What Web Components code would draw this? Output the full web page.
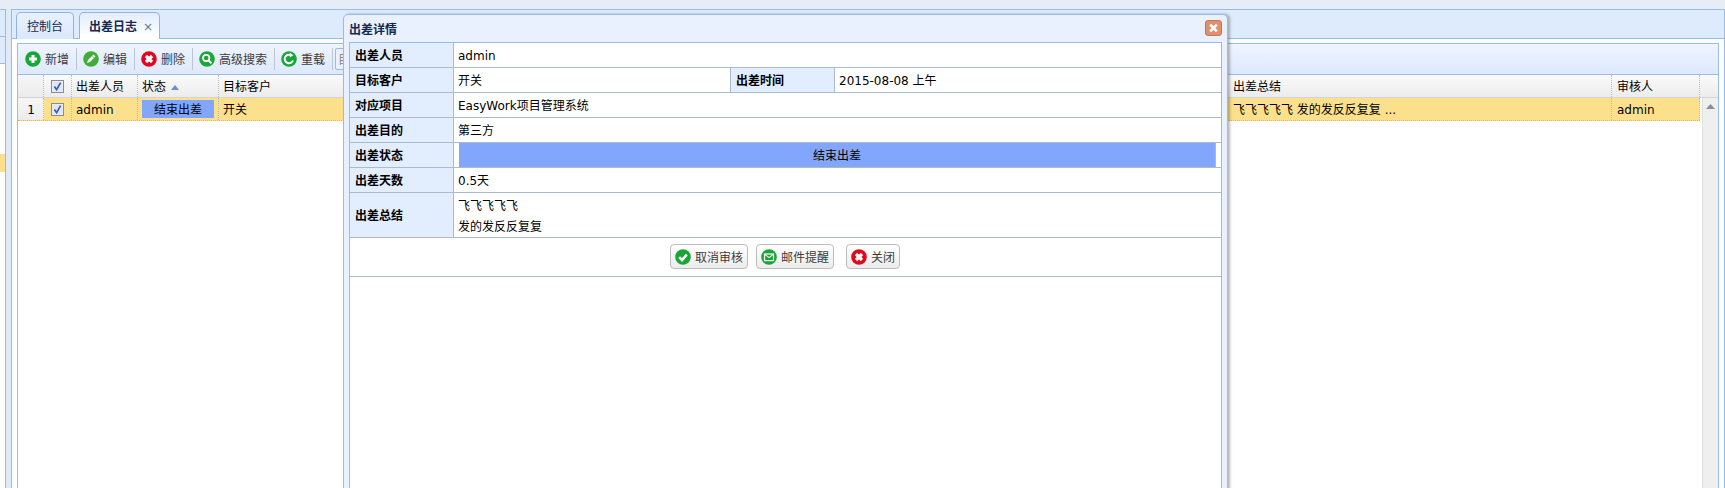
<!DOCTYPE html>
<html lang="zh">
<head>
<meta charset="utf-8">
<title>出差日志</title>
<style>
html,body{margin:0;padding:0;height:488px;overflow:hidden;background:#e6edf6;}
body{font:12px/16px "DejaVu Sans","Noto Sans CJK SC",sans-serif;color:#000;}
</style>
</head>
<body>
<work-shell>
  <side-strip slot="side"></side-strip>
  <tab-panel slot="main">
    <tab-item slot="tabs">控制台</tab-item>
    <tab-item slot="tabs" active closable>出差日志</tab-item>
    <tool-bar>
      <tool-button icon="plus">新增</tool-button>
      <tool-sep></tool-sep>
      <tool-button icon="edit">编辑</tool-button>
      <tool-sep></tool-sep>
      <tool-button icon="del">删除</tool-button>
      <tool-sep></tool-sep>
      <tool-button icon="search">高级搜索</tool-button>
      <tool-sep></tool-sep>
      <tool-button icon="reload">重载</tool-button>
      <tool-sep></tool-sep>
      <tool-box>目</tool-box>
    </tool-bar>
    <data-grid>
      <grid-row slot="head" head>
        <grid-cell kind="num"></grid-cell>
        <grid-cell kind="check"><check-box></check-box></grid-cell>
        <grid-cell>出差人员</grid-cell>
        <grid-cell>状态<sort-arrow></sort-arrow></grid-cell>
        <grid-cell>目标客户</grid-cell>
        <grid-cell wide>出差总结</grid-cell>
        <grid-cell wide>审核人</grid-cell>
      </grid-row>
      <grid-row slot="rows" selected>
        <grid-cell kind="num">1</grid-cell>
        <grid-cell kind="check"><check-box></check-box></grid-cell>
        <grid-cell>admin</grid-cell>
        <grid-cell kind="pill"><status-pill>结束出差</status-pill></grid-cell>
        <grid-cell>开关</grid-cell>
        <grid-cell wide>飞飞飞飞飞 发的发反反复复 ...</grid-cell>
        <grid-cell wide>admin</grid-cell>
      </grid-row>
    </data-grid>
  </tab-panel>
  <detail-dialog slot="over" heading="出差详情">
    <detail-row label="出差人员"><span>admin</span></detail-row>
    <detail-row label="目标客户" label2="出差时间" value2="2015-08-08 上午"><span>开关</span></detail-row>
    <detail-row label="对应项目"><span>EasyWork项目管理系统</span></detail-row>
    <detail-row label="出差目的"><span>第三方</span></detail-row>
    <detail-row label="出差状态" status><span>结束出差</span></detail-row>
    <detail-row label="出差天数"><span>0.5天</span></detail-row>
    <detail-row label="出差总结" tall><span>飞飞飞飞飞<br>发的发反反复复</span></detail-row>
    <action-row>
      <action-button icon="check">取消审核</action-button>
      <action-button icon="mail">邮件提醒</action-button>
      <action-button icon="del" style="margin-left:4px">关闭</action-button>
    </action-row>
  </detail-dialog>
</work-shell>

<script>
const ICONS = {
  plus:  ['#18a636','<path d="M8 4v8M4 8h8" stroke="#fff" stroke-width="3" fill="none"/>'],
  edit:  ['#3fae36','<path d="M4 12l1-3 5.5-5.5 2 2L7 11z" fill="#fff"/><path d="M9.6 5.3l1.6 1.6" stroke="#3fae36" stroke-width=".8"/>'],
  del:   ['#e2081c','<path d="M5 5l6 6M11 5l-6 6" stroke="#fff" stroke-width="3.2" fill="none"/>'],
  search:['#1ea63a','<circle cx="7.2" cy="7" r="3.2" fill="none" stroke="#fff" stroke-width="1.7"/><path d="M9.6 9.4l2.8 2.8" stroke="#fff" stroke-width="2"/>'],
  reload:['#18a636','<path d="M12 9.5A4.3 4.3 0 1 1 9.6 4" fill="none" stroke="#fff" stroke-width="2"/><path d="M8.8 1.8l3.6 2.4-3.6 2.2z" fill="#fff"/>'],
  check: ['#18a636','<path d="M4.2 8.2l2.8 2.8 4.8-5.4" fill="none" stroke="#fff" stroke-width="2.6"/>'],
  mail:  ['#18a636','<rect x="3.5" y="5" width="9" height="6.6" fill="none" stroke="#fff" stroke-width="1.2"/><path d="M3.8 5.4L8 8.6l4.2-3.2" fill="none" stroke="#fff" stroke-width="1.1"/>']
};
function iconSvg(name){
  const [c,inner] = ICONS[name];
  return `<svg width="16" height="16" viewBox="0 0 16 16" style="display:block;flex:none"><circle cx="8" cy="8" r="7.8" fill="${c}"/>${inner}</svg>`;
}
function def(name, html, init){
  const tpl = document.createElement('template');
  tpl.innerHTML = html;
  customElements.define(name, class extends HTMLElement{
    constructor(){
      super();
      this.attachShadow({mode:'open'}).appendChild(tpl.content.cloneNode(true));
    }
    connectedCallback(){ if(init) init(this, this.shadowRoot); }
  });
}

def('work-shell', `<style>
  :host{display:flex;position:relative;height:488px;padding-top:9px;box-sizing:border-box;gap:5px;overflow:hidden;background:#dfe9f7;}
  .top{position:absolute;left:0;right:0;top:0;height:9px;background:#e6edf6;}
  ::slotted([slot=main]){flex:1;min-width:0;}
</style><div class="top"></div><slot name="side"></slot><slot name="main"></slot><slot name="over"></slot>`);

def('side-strip', `<style>
  :host{display:flex;flex-direction:column;width:6px;box-sizing:border-box;position:relative;border-top:1px solid #99bbe8;border-right:1px solid #99bbe8;background:#fff;}
  .h{height:26px;background:#deebfd;border-bottom:1px solid #99bbe8;flex:none;}
  .y{height:18px;background:#fde08c;margin-top:90px;flex:none;}
</style><div class="h"></div><div class="h"></div><div class="y"></div>`);

def('tab-panel', `<style>
  :host{display:flex;flex-direction:column;box-sizing:border-box;border:1px solid #99bbe8;border-bottom:0;background:#fff;height:479px;}
  .strip{display:flex;align-items:flex-end;gap:5px;height:29px;box-sizing:border-box;padding-left:4px;background:#deebfd;border-bottom:1px solid #99bbe8;flex:none;}
  .inner{flex:1;min-height:0;margin:4px 5px 0;border:1px solid #99bbe8;border-bottom:0;display:flex;flex-direction:column;}
</style><div class="strip"><slot name="tabs"></slot></div><div class="inner"><slot></slot></div>`);

def('tab-item', `<style>
  :host{display:flex;align-items:center;box-sizing:border-box;height:27px;padding:2px 10px 0;border:1px solid #8fb3e6;border-bottom:0;border-radius:5px 5px 0 0;background:linear-gradient(#e9f1fe,#dbe8fc);color:#15294f;position:relative;margin-bottom:-1px;}
  :host([active]){background:linear-gradient(#e3edfd,#fff 90%);font-weight:bold;z-index:1;padding-left:9px;padding-right:6px;color:#15294f;}
  .x{display:none;margin-left:6px;font-weight:normal;color:#5a7aa0;font-size:12px;}
  :host([closable]) .x{display:inline;}
</style><slot></slot><span class="x">×</span>`);

def('tool-bar', `<style>
  :host{display:flex;align-items:center;height:30px;padding-left:7px;box-sizing:content-box;background:linear-gradient(#eff4fe,#dde9fc);border-bottom:1px solid #99bbe8;flex:none;overflow:hidden;}
</style><slot></slot>`);

def('tool-button', `<style>
  :host{display:flex;align-items:center;gap:4px;color:#3c3c3c;white-space:nowrap;}
  #i{display:block}
  .t{display:block;padding-top:2px;}
</style><span id="i"></span><span class="t"><slot></slot></span>`, (el,root)=>{root.getElementById('i').innerHTML=iconSvg(el.getAttribute('icon'));});

def('tool-sep', `<style>
  :host{display:block;width:1px;height:22px;background:#b9c6d6;margin:0 6px 0 7px;flex:none;}
</style>`);

def('tool-box', `<style>
  :host{display:flex;align-items:center;height:22px;width:120px;box-sizing:border-box;margin-left:-4px;padding:2px 0 0 2px;border:1px solid #99bbe8;border-radius:2px;background:#eaf1fd;color:#888;flex:none;}
</style><slot></slot>`);

def('data-grid', `<style>
  :host{display:flex;flex-direction:column;flex:1;min-height:0;background:#fff;}
  .head{flex:none;}
  .body{flex:1;display:flex;min-height:0;}
  .rows{flex:1;}
  .bar{width:16px;flex:none;box-sizing:border-box;background:#efefef;border-left:1px solid #e0e0e0;display:flex;justify-content:center;padding-top:6px;}
</style><div class="head"><slot name="head"></slot></div>
<div class="body"><div class="rows"><slot name="rows"></slot></div>
<div class="bar"><svg width="9" height="6" viewBox="0 0 9 6"><path d="M4.5 0L9 5H0z" fill="#8a8f94"/></svg></div></div>`);

def('grid-row', `<style>
  :host{display:grid;grid-template-columns:26px 28px 66px 81px 1009px 384px 88px;height:23px;box-sizing:border-box;background:#fff;border-bottom:1px dotted #cdbb82;width:1682px;}
  :host([selected]){background:#fde08c;}
  :host([head]){width:100%;grid-template-columns:26px 28px 66px 81px 1009px 384px 88px 1fr;background:linear-gradient(#fafafa,#ececec);border-bottom:1px solid #d4d4d4;}
</style><slot></slot>`);

def('grid-cell', `<style>
  :host{display:flex;align-items:center;box-sizing:border-box;padding:2px 0 0 4px;border-right:1px dotted #bbb;white-space:nowrap;overflow:hidden;min-width:0;}
  :host([wide]){padding-left:5px;}
  :host([kind=num]){padding:2px 8px 0 0;justify-content:flex-end;background:linear-gradient(#f6f6f6,#ececec);}
  :host([kind=check]){padding:0;justify-content:center;}
  :host([kind=pill]){padding:0 4px;}
</style><slot></slot>`);

def('check-box', `<style>
  :host{display:block;width:13px;height:13px;flex:none;}
  svg{display:block}
</style><svg width="13" height="13" viewBox="0 0 13 13"><rect x=".5" y=".5" width="12" height="12" fill="#eef2fb" stroke="#8b8b8b"/><rect x="1.5" y="1.5" width="10" height="10" fill="#dfe6f6"/><path d="M3.4 6.4l2.2 3.2L9.6 2.6" fill="none" stroke="#3f5fae" stroke-width="1.7"/></svg>`);

def('sort-arrow', `<style>
  :host{display:block;margin-left:5px;width:8px;height:5px;}
  svg{display:block}
</style><svg width="8" height="5" viewBox="0 0 8 5"><path d="M4 0l4 5H0z" fill="#5f93d8"/></svg>`);

def('status-pill', `<style>
  :host{display:flex;justify-content:center;align-items:center;box-sizing:border-box;padding-top:2px;width:72px;height:18px;background:#82a6fb;}
</style><slot></slot>`);

def('detail-dialog', `<style>
  :host{position:absolute;left:343px;top:14px;width:885px;height:500px;box-sizing:border-box;border:1px solid #99bbe8;border-radius:5px 5px 0 0;background:#e9f1fe;box-shadow:2px 0 3px rgba(0,0,0,.28);display:flex;flex-direction:column;padding:0 5px;}
  .title{display:flex;align-items:center;justify-content:space-between;height:27px;flex:none;}
  h2{margin:2px 0 0;font-size:12px;font-weight:bold;color:#15294f;}
  svg{display:block;margin:-1px 0 0;}
  .body{flex:1;background:#fff;border:1px solid #99bbe8;border-bottom:0;}
</style><div class="title"><h2 id="h"></h2>
<svg width="17" height="16" viewBox="0 0 17 16"><rect x=".5" y=".5" width="16" height="15" rx="2.5" fill="#e18f6c" stroke="#bd7a5a"/><path d="M5.2 4.6l6.6 6.8M11.8 4.6l-6.6 6.8" stroke="#fff" stroke-width="2.6"/></svg>
</div><div class="body"><slot></slot></div>`, (el,root)=>{root.getElementById('h').textContent=el.getAttribute('heading');});

def('detail-row', `<style>
  :host{display:flex;height:25px;box-sizing:border-box;border-bottom:1px solid #aabccb;}
  :host([tall]){height:45px;}
  .l{display:flex;align-items:center;box-sizing:border-box;width:104px;padding:2px 0 0 5px;background:#e2edfe;border-right:1px solid #aabccb;font-weight:bold;flex:none;}
  .v{display:flex;align-items:center;flex:1;min-width:0;padding:2px 0 0 4px;}
  :host([tall]) .v{line-height:21px;padding-top:3px;}
  :host([status]) .v{padding:0 0 0 5px;}
  :host([status]) .fill{flex:1;align-self:stretch;display:flex;align-items:center;justify-content:center;box-sizing:border-box;padding-top:2px;background:#82a6fb;margin-right:5px;border-right:1px solid #aabccb;}
  .first{width:277px;flex:none;box-sizing:border-box;border-right:1px solid #aabccb;}
</style><div class="l" id="l"></div><div class="v" id="v"><div class="fill"><slot></slot></div></div>`, (el,root)=>{
  root.getElementById('l').textContent = el.getAttribute('label');
  const l2 = el.getAttribute('label2');
  if(l2 && !root.getElementById('v2')){
    const v = root.getElementById('v');
    v.classList.add('first'); v.style.flex='none';
    const a = document.createElement('div'); a.className='l'; a.textContent=l2;
    const b = document.createElement('div'); b.className='v'; b.id='v2'; b.textContent=el.getAttribute('value2');
    root.append(a,b);
  }
});

def('action-row', `<style>
  :host{display:flex;justify-content:center;gap:8px;height:39px;box-sizing:border-box;padding:6px 1px 0 0;border-bottom:1px solid #aabccb;}
</style><slot></slot>`);

def('action-button', `<style>
  :host{display:flex;align-items:center;gap:4px;height:25px;box-sizing:border-box;padding:0 4px;border:1px solid #bcbcbc;border-radius:4px;background:linear-gradient(#fff,#ececec);color:#3c3c3c;white-space:nowrap;}
  .t{display:block;padding-top:2px;}
</style><span id="i"></span><span class="t"><slot></slot></span>`, (el,root)=>{root.getElementById('i').innerHTML=iconSvg(el.getAttribute('icon'));});
</script>
</body>
</html>
